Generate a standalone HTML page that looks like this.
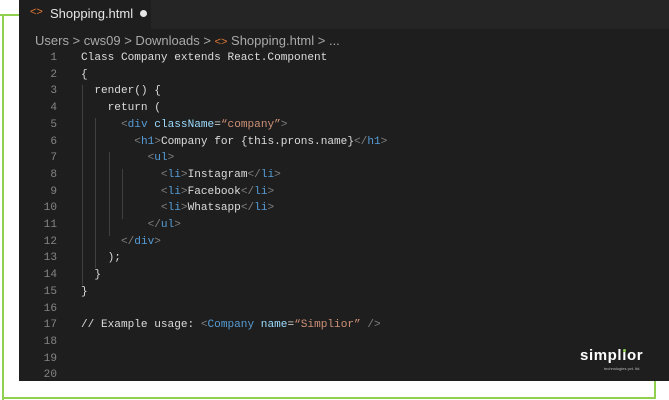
<!DOCTYPE html>
<html><head><meta charset="utf-8"><style>
html,body{margin:0;padding:0;background:#fff;width:669px;height:400px;overflow:hidden;position:relative;font-family:"Liberation Sans",sans-serif}
.g{position:absolute;background:#8fd14f}
#ed{position:absolute;left:19px;top:0;width:650px;height:381px;background:#1e1e1e}
#tabbar{position:absolute;left:0;top:0;width:650px;height:29px;background:#252526}
#tab{position:absolute;left:0;top:0;width:132px;height:29px;background:#1e1e1e;color:#e6e6e6;font-size:13px}
#bc{position:absolute;left:16px;top:33px;color:#a9a9a9;font-size:13px;white-space:pre}
.o{color:#e37933}
#code{position:absolute;left:0;top:50px;font-family:"Liberation Mono",monospace;font-size:11.1px;line-height:16.7px;white-space:pre;color:#dcdcdc}
.ln{position:absolute;left:0;width:38px;text-align:right;color:#858585}
.c{position:absolute;left:62px}
.t{color:#808080}.k{color:#569cd6}.a{color:#9cdcfe}.s{color:#ce9178}
.gd{position:absolute;width:1px;background:#404040}
</style></head><body>
<div class="g" style="left:0;top:14px;width:19px;height:2px"></div>
<div class="g" style="left:2px;top:14px;width:2px;height:386px"></div>
<div class="g" style="left:2px;top:397px;width:654px;height:2px"></div>
<div class="g" style="left:654px;top:381px;width:2px;height:18px"></div>
<div id="ed">
<div id="tabbar"><div id="tab"><span class="o" style="position:absolute;left:11px;top:6px;font-size:11px">&lt;&gt;</span><span style="position:absolute;left:31px;top:6px">Shopping.html</span><span style="position:absolute;left:121px;top:10px;width:7px;height:7px;border-radius:50%;background:#e6e6e6"></span></div></div>
<div id="bc">Users &gt; cws09 &gt; Downloads &gt; <span class="o" style="font-size:11px">&lt;&gt;</span> Shopping.html &gt; ...</div>
<div class="gd" style="left:63px;top:85px;height:200px"></div>
<div class="gd" style="left:76px;top:118px;height:150px"></div>
<div class="gd" style="left:90px;top:152px;height:84px"></div>
<div class="gd" style="left:103px;top:169px;height:50px"></div>
<div id="code">
<div class="ln" style="top:0">1</div><div class="c" style="top:0">Class Company extends React.Component</div>
<div class="ln" style="top:16.7px">2</div><div class="c" style="top:16.7px">{</div>
<div class="ln" style="top:33.4px">3</div><div class="c" style="top:33.4px">  render() {</div>
<div class="ln" style="top:50.1px">4</div><div class="c" style="top:50.1px">    return (</div>
<div class="ln" style="top:66.8px">5</div><div class="c" style="top:66.8px">      <span class="t">&lt;</span><span class="k">div</span> <span class="a">className</span>=<span class="s">“company”</span><span class="t">&gt;</span></div>
<div class="ln" style="top:83.5px">6</div><div class="c" style="top:83.5px">        <span class="t">&lt;</span><span class="k">h1</span><span class="t">&gt;</span>Company for {this.prons.name}<span class="t">&lt;/</span><span class="k">h1</span><span class="t">&gt;</span></div>
<div class="ln" style="top:100.2px">7</div><div class="c" style="top:100.2px">          <span class="t">&lt;</span><span class="k">ul</span><span class="t">&gt;</span></div>
<div class="ln" style="top:116.9px">8</div><div class="c" style="top:116.9px">            <span class="t">&lt;</span><span class="k">li</span><span class="t">&gt;</span>Instagram<span class="t">&lt;/</span><span class="k">li</span><span class="t">&gt;</span></div>
<div class="ln" style="top:133.6px">9</div><div class="c" style="top:133.6px">            <span class="t">&lt;</span><span class="k">li</span><span class="t">&gt;</span>Facebook<span class="t">&lt;/</span><span class="k">li</span><span class="t">&gt;</span></div>
<div class="ln" style="top:150.3px">10</div><div class="c" style="top:150.3px">            <span class="t">&lt;</span><span class="k">li</span><span class="t">&gt;</span>Whatsapp<span class="t">&lt;/</span><span class="k">li</span><span class="t">&gt;</span></div>
<div class="ln" style="top:167px">11</div><div class="c" style="top:167px">          <span class="t">&lt;/</span><span class="k">ul</span><span class="t">&gt;</span></div>
<div class="ln" style="top:183.7px">12</div><div class="c" style="top:183.7px">      <span class="t">&lt;/</span><span class="k">div</span><span class="t">&gt;</span></div>
<div class="ln" style="top:200.4px">13</div><div class="c" style="top:200.4px">    );</div>
<div class="ln" style="top:217.1px">14</div><div class="c" style="top:217.1px">  }</div>
<div class="ln" style="top:233.8px">15</div><div class="c" style="top:233.8px">}</div>
<div class="ln" style="top:250.5px">16</div>
<div class="ln" style="top:267.2px">17</div><div class="c" style="top:267.2px">// Example usage: <span class="t">&lt;</span><span class="k">Company</span> <span class="a">name</span>=<span class="s">“Simplior”</span> <span class="t">/&gt;</span></div>
<div class="ln" style="top:283.9px">18</div>
<div class="ln" style="top:300.6px">19</div>
<div class="ln" style="top:317.3px">20</div>
</div>
<div style="position:absolute;left:561px;top:347px;color:#fff;font-weight:bold;font-size:15px;letter-spacing:0.6px">simpl<span style="position:relative">ı<span style="position:absolute;left:1px;top:2px;width:3px;height:3px;background:#8fd14f;border-radius:50%"></span></span>or</div>
<div style="position:absolute;left:585px;top:366px;color:#bbb;font-size:4px">technologies pvt. ltd.</div>
</div>
</body></html>
